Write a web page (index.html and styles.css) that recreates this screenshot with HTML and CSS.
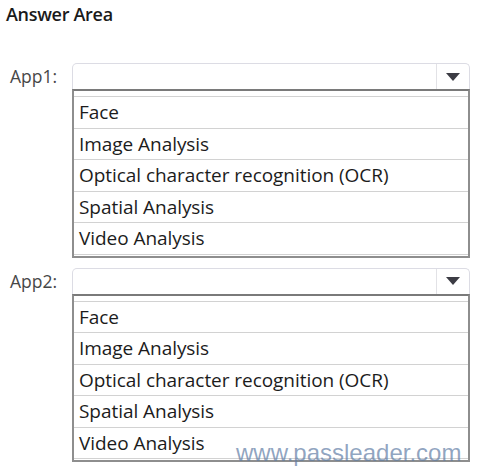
FILE: index.html
```html
<!DOCTYPE html>
<html lang="en">
<head>
<meta charset="utf-8">
<title>Answer Area</title>
<link rel="stylesheet" href="styles.css">
</head>
<body>
<div class="page">
  <h1 class="title">Answer Area</h1>

  <div class="field field-first">
    <span class="label">App1:</span>
    <div class="combo">
      <div class="select">
        <span class="value"></span>
        <span class="btn"><svg width="14" height="8" viewBox="0 0 14 8"><path d="M0 0H14L7 8Z" fill="#3c3c44"/></svg></span>
      </div>
      <ul class="list">
        <li>Face</li>
        <li>Image Analysis</li>
        <li>Optical character recognition (OCR)</li>
        <li>Spatial Analysis</li>
        <li>Video Analysis</li>
      </ul>
    </div>
  </div>

  <div class="field field-second">
    <span class="label">App2:</span>
    <div class="combo">
      <div class="select">
        <span class="value"></span>
        <span class="btn"><svg width="14" height="8" viewBox="0 0 14 8"><path d="M0 0H14L7 8Z" fill="#3c3c44"/></svg></span>
      </div>
      <ul class="list">
        <li>Face</li>
        <li>Image Analysis</li>
        <li>Optical character recognition (OCR)</li>
        <li>Spatial Analysis</li>
        <li>Video Analysis</li>
      </ul>
    </div>
  </div>

  <div class="watermark">www.passleader.com</div>
</div>
</body>
</html>
```

FILE: styles.css
```css
html, body {
  margin: 0;
  padding: 0;
  background: #ffffff;
}

.page {
  position: relative;
  width: 480px;
  height: 474px;
  overflow: hidden;
  font-family: "Open Sans", "Noto Sans", "DejaVu Sans", sans-serif;
  color: #1e1e1e;
}

.title {
  margin: 0;
  padding: 2px 0 0 6px;
  font-size: 18px;
  line-height: 24px;
  font-weight: 600;
  color: #1a1a1a;
  letter-spacing: -0.3px;
}

.field {
  display: flex;
  align-items: flex-start;
}

.field-first {
  margin-top: 37px;
}

.field-second {
  margin-top: 10px;
}

.label {
  width: 62px;
  padding-left: 10px;
  font-size: 17.5px;
  line-height: 26px;
  color: #474747;
}

.combo {
  width: 398px;
}

.select {
  display: flex;
  height: 26px;
  box-sizing: border-box;
  border: 1px solid #dcdce4;
  border-bottom: none;
  border-radius: 5px 5px 0 0;
  background: #fff;
}

.value {
  flex: 1;
}

.btn {
  width: 32px;
  border-left: 1px solid #e2e2e6;
  display: flex;
  align-items: center;
  justify-content: center;
}

.list {
  list-style: none;
  margin: 0;
  padding: 5px 0 1px;
  border: 2px solid #8e8e8e;
  border-top-color: #7a7a7a;
  background: #fff;
}

.list li {
  height: 30.5px;
  border-top: 1px solid #d2d2d2;
  padding-left: 5px;
  font-size: 19px;
  line-height: 30px;
  color: #1c1c1c;
  letter-spacing: -0.05px;
}

.list li:last-child {
  border-bottom: 1px solid #d2d2d2;
}

.watermark {
  position: absolute;
  left: 236px;
  top: 438px;
  font-family: "Liberation Sans", Arial, sans-serif;
  font-size: 24px;
  line-height: 30px;
  color: rgba(95, 125, 165, 0.7);
}
```
